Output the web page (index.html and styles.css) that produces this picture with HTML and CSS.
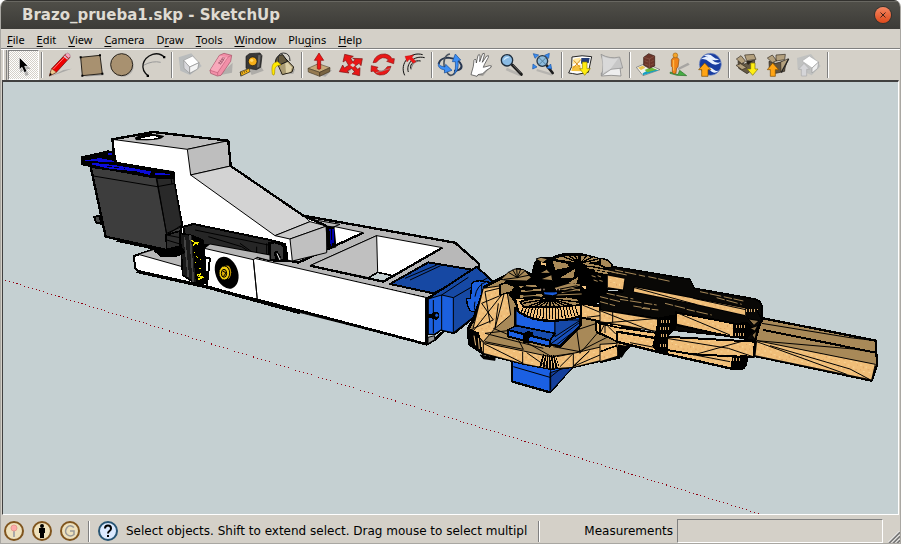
FILE: index.html
```html
<!DOCTYPE html>
<html lang="en">
<head>
<meta charset="utf-8">
<title>Brazo_prueba1.skp - SketchUp</title>
<link rel="stylesheet" href="styles.css">
</head>
<body>
<div class="window">
<header class="titlebar">
  <h1>Brazo_prueba1.skp - SketchUp</h1>
  <button class="close" aria-label="Close"><svg viewBox="0 0 16 16"><path d="M5.5 5.5l5 5M10.5 5.5l-5 5"/></svg></button>
</header>
<nav class="menubar">
  <button><u>F</u>ile</button><button><u>E</u>dit</button><button><u>V</u>iew</button><button><u>C</u>amera</button><button>D<u>r</u>aw</button><button><u>T</u>ools</button><button><u>W</u>indow</button><button>Plu<u>g</u>ins</button><button><u>H</u>elp</button>
</nav>
<div class="toolbar" role="toolbar">
  <span class="grip"></span>
  <button class="tool pressed" aria-label="Select"><svg viewBox="24 150 93 90"><path d="M61 177v42l9-8 7 17 9-4-7-17h13z" fill="#777" opacity=".5"/><path d="M58 172v37l8-7 7 16 8-4-7-15h11z" fill="#000" stroke="#fff" stroke-width="2"/></svg></button>
  <span class="sep"></span>
  <button class="tool" aria-label="Line"><svg viewBox="135 150 93 90"><path d="M150 230l65-24-25 4z" fill="#999" opacity=".7"/><path d="M148 228l7-22 42-44 13 10-41 45z" fill="#e00" stroke="#500" stroke-width="2"/><path d="M148 228l7-22 14 11z" fill="#ecc98e" stroke="#432"/><path d="M148 228l3-9 5 4z"/><path d="M160 207l40-42" stroke="#f77" stroke-width="3"/><path d="M195 165l7-6q9 2 9 10l-5 6z" fill="#f5a6bd" stroke="#645"/><path d="M192 168l11 10" stroke="#ccd" stroke-width="4"/></svg></button>
  <button class="tool" aria-label="Rectangle"><svg viewBox="228 150 93 90"><path d="M249 230l61-4v-8z" fill="#999"/><path d="M242 172l58-6 7 55-60 6z" fill="#a89170" stroke="#29241d" stroke-width="3"/><path d="M239 169h6v6h-6zM297 163h6v6h-6zM304 218h6v6h-6zM244 224h6v6h-6z"/></svg></button>
  <button class="tool" aria-label="Circle"><svg viewBox="321 150 93 90"><circle cx="369" cy="198" r="32" fill="#999" opacity=".6"/><circle cx="365" cy="194" r="33" fill="#a89170" stroke="#29241d" stroke-width="3"/></svg></button>
  <button class="tool" aria-label="Arc"><svg viewBox="414 150 93 90"><path d="M430 196q28-15 52-9" fill="none" stroke="#999" stroke-width="3"/><path d="M446 229c-30-22-18-55 12-66q22-6 36 10" fill="none" stroke="#111" stroke-width="4"/><path d="M440 224h7v7h-7zM489 168h7v7h-7z"/></svg></button>
  <span class="sep"></span>
  <button class="tool" aria-label="Make Component"><svg viewBox="525 150 93 90"><path d="M536 172l38-12 31 38-35 27-29-13z" fill="#aab0b7" opacity=".65"/><path d="M551 181l27-13 19 20-28 13z" fill="#fff" stroke="#999" stroke-width="2"/><path d="M551 181l18 20v19l-17-15z" fill="#d8d8dc" stroke="#999" stroke-width="2"/><path d="M569 201l28-13-4 19-24 13z" fill="#f4f4f4" stroke="#888" stroke-width="2"/></svg></button>
  <button class="tool" aria-label="Eraser"><svg viewBox="618 150 93 90"><path d="M658 226l38-8 2-30z" fill="#999" opacity=".6"/><path d="M630 211l28-45 14-6 23 6-3 18-29 42-11 2-20-8z" fill="#f28fa8" stroke="#a04d62" stroke-width="2"/><path d="M630 211l23 7 31-47 11-5M653 218v9" fill="none" stroke="#bd6178" stroke-width="2"/><path d="M632 209l27-42 24 5-31 44z" fill="#f8a9bb"/><path d="M656 192l14-21M661 194l14-22M655 187l7 4m-3-9 8 5m-3-10 8 4" stroke="#904b60" stroke-width="2"/></svg></button>
  <button class="tool" aria-label="Tape Measure"><svg viewBox="711 150 93 90"><path d="M750 214l28-22 13 20-36 13z" fill="#888" opacity=".5"/><path d="M738 169l10-8 32-2 6 8-4 35-13 7-31-4z" fill="#393939" stroke="#171717" stroke-width="2"/><path d="M775 165l7 1-4 34-7 3z" fill="#666"/><circle cx="758" cy="184" r="13" fill="#f5ae19" stroke="#111" stroke-width="2"/><circle cx="755" cy="181" r="5" fill="#ffd569"/><path d="M720 216l28-11 2 10-26 13z" fill="#f9b716" stroke="#222" stroke-width="2"/><path d="M726 216l2 5m4-8 2 5m4-7 2 5M722 217v12" stroke="#222" stroke-width="2"/></svg></button>
  <button class="tool" aria-label="Paint Bucket"><svg viewBox="804 150 93 90"><path d="M840 223l40-2 5-14-27-8z" fill="#888" opacity=".6"/><path d="M829 184l26-10 26 27-5 15-29 8z" fill="#ac9d73" stroke="#272217" stroke-width="3"/><path d="M855 179l21 23-5 14-13 3z" fill="#ddd0a7"/><path d="M826 186q3-22 22-22l15 20-29 13z" fill="#665a3e" stroke="#111" stroke-width="3"/><path d="M836 186q-6-27 14-27t20 24" fill="none" stroke="#333" stroke-width="3"/><path d="M833 185c-17 2-19 14-16 38q6 7 7-4c0-17 2-22 19-24z" fill="#ffea00" stroke="#aa9100" stroke-width="2"/></svg></button>
  <span class="sep"></span>
  <button class="tool" aria-label="Push Pull"><svg viewBox="15 150 93 90"><path d="M28 218l48 12 20-20z" fill="#999" opacity=".7"/><path d="M24 205l31-14 35 12-31 14z" fill="#c6a979" stroke="#5a4b33" stroke-width="2"/><path d="M24 205l35 12v12l-34-13z" fill="#967b52" stroke="#4a3e2b" stroke-width="2"/><path d="M59 217l31-14-1 12-30 14z" fill="#796442" stroke="#44351f" stroke-width="2"/><path d="M52 206v-25h-9l14-22 14 22h-9v25q-5 4-10 0z" fill="#f01616" stroke="#8c0a0a" stroke-width="2"/></svg></button>
  <button class="tool" aria-label="Move"><svg viewBox="108 150 93 90"><path d="M146 192l31 35M171 188l-31 29" stroke="#888" stroke-width="7" opacity=".5"/><path d="M134 163l26 6-8 6 7 12 6-9-7-3 29 1-4 21-6-7-12 9 8 9 7-5-1 24-23-5 8-7-9-10-13 8 5 6-29-4 10-20 5 9 13-8-9-15-8 5z" fill="#e91717" stroke="#771414" stroke-width="2"/><path d="M150 195l8-5 8 5-7 7z" fill="#d5d1ca"/></svg></button>
  <button class="tool" aria-label="Rotate"><svg viewBox="201 150 93 90"><path d="M219 188q8-28 37-26 14 2 20 14h7l-2 15-21-7 6-4q-19-17-37 7zM273 199q-7 28-34 26-12-1-19-12l-7 2 1-18 20 5-5 5q17 17 33-7z" fill="#e91717" stroke="#8a1717" stroke-width="2"/><path d="M228 218l45-13" stroke="#999" stroke-width="2"/></svg></button>
  <button class="tool" aria-label="Follow Me"><svg viewBox="294 150 93 90"><path d="M314 226c-17-36 17-73 54-62M325 216c-8-24 16-51 49-43M332 206c-3-16 13-27 30-23" fill="none" stroke="#111" stroke-width="3"/><path d="M333 209c4-17 7-21 23-26" fill="none" stroke="#777" stroke-width="3"/><path d="M315 169l27-4-6 7 12 13-8 5-12-12-7 8z" fill="#f11717" stroke="#9c1111"/></svg></button>
  <span class="sep"></span>
  <button class="tool" aria-label="Orbit"><svg viewBox="405 150 93 90"><path d="M416 192c5-28 58-22 68 3 4 14-12 18-22 17" fill="none" stroke="#27364f" stroke-width="6"/><path d="M436 213c-10-29-1-49 14-51M441 216c10 22 31 4 29-22" fill="none" stroke="#49525e" stroke-width="5"/><path d="M415 190q4 10 20 11l2-8 19 18-23 8 1-9q-22-4-19-20zM461 224q7-11 5-39h-9l9-23 16 18-8 3q4 29-13 41z" fill="#3d8ff6" stroke="#164c94" stroke-width="2"/></svg></button>
  <button class="tool" aria-label="Pan"><svg viewBox="498 150 93 90"><path d="M520 225l29 3 29-35-26 20z" fill="#777" opacity=".5"/><path d="M513 224l7-25 2-18q4-8 6 0l1 8 5-23q5-6 6 2l-1 17 9-24q7-4 5 4l-6 22 13-19q8-4 5 4l-12 22-3 8 19-5q8 0 4 5-17 10-25 19l-14 3-3 5z" fill="#fff" stroke="#333" stroke-width="2"/></svg></button>
  <button class="tool" aria-label="Zoom"><svg viewBox="591 150 93 90"><path d="M619 207l42 18" stroke="#999" stroke-width="8" opacity=".5"/><path d="M637 195l27 28" stroke="#1d1d1d" stroke-width="9" stroke-linecap="round"/><path d="M639 195l23 24" stroke="#777" stroke-width="2"/><circle cx="621" cy="181" r="17" fill="#8abbe4" stroke="#1f2e3e" stroke-width="4"/><path d="M610 182q3-14 20-11-12 4-20 11z" fill="#d3ecff"/></svg></button>
  <button class="tool" aria-label="Zoom Extents"><svg viewBox="684 150 93 90"><path d="M710 210l46 14" stroke="#999" stroke-width="7" opacity=".5"/><path d="M740 196l18 23" stroke="#1d1d1d" stroke-width="8" stroke-linecap="round"/><circle cx="727" cy="183" r="16" fill="#8dbbdc" stroke="#253646" stroke-width="4"/><path d="M717 173l21 21M738 173l-21 21" stroke="#55819f" stroke-width="3"/><path d="M700 161l16 4-11 10zM748 160l-2 15-12-9zM698 207l1-15 12 9zM755 207l-15-3 12-12z" fill="#388df5" stroke="#1b55a3" stroke-width="2"/></svg></button>
  <span class="sep"></span>
  <button class="tool" aria-label="Add Location"><svg viewBox="795 150 93 90"><path d="M806 219l9-19 1-29q31-7 59-1l-10 47-34 6q-15-3-25-4z" fill="#fff" stroke="#222" stroke-width="3"/><path d="M821 176l20-3-2 16-22 3z" fill="#ffe7a2"/><path d="M844 174h25l-3 15-23 2z" fill="#253e77"/><path d="M818 198l23-4 2 20-29-1z" fill="#f6c23d"/><path d="M821 181l18 20M819 205l24-27" stroke="#d89025" stroke-width="3"/><path d="M847 186h14v20h10l-17 20-15-20h8z" fill="#ffed10" stroke="#8c8000" stroke-width="2"/></svg></button>
  <button class="tool" aria-label="Toggle Terrain"><svg viewBox="-12 150 93 90"><path d="M4 219l11-10 45-7 3 26q-30-4-59 0z" fill="#eee" stroke="#777" stroke-width="2"/><path d="M3 163q27 15 56 8l9 33-35 4-28 19q8-33-2-64z" fill="#c7c7c7" stroke="#888" stroke-width="2"/><path d="M7 169q25 12 48 6l-23 31-23 13z" fill="#ddd" opacity=".8"/></svg></button>
  <span class="sep"></span>
  <button class="tool" aria-label="Photo Textures"><svg viewBox="99 150 93 90"><path d="M109 202l28-12 43 19-51 18z" fill="#f2f2e9" stroke="#656565" stroke-width="2"/><path d="M128 220l24-14 24 5-47 15z" fill="#159fc4"/><path d="M134 210l18-8 19 7-29 8z" fill="#6fba3c"/><path d="M114 203l14-6 8 6-13 7z" fill="#edc34d"/><path d="M131 172l15-11 18 7v30l-16 7-17-9z" fill="#6c352a" stroke="#30150f" stroke-width="2"/><path d="M131 172l17 5 16-9M148 177v28M134 182l11 4m-11 6 11 4M152 185l9-4m-9 14 9-4" fill="none" stroke="#8c5a4c" stroke-width="2"/></svg></button>
  <button class="tool" aria-label="Street View"><svg viewBox="192 150 93 90"><path d="M235 211l34-17-5-6-31 16z" fill="#888" opacity=".6"/><path d="M211 216l23 8 5-13 21 16-29-1-21-6z" fill="#46ad43" stroke="#287027" stroke-width="2"/><path d="M214 180l5-7h14l4 6-3 22-4 3-2 15-6 3-5-5v-15l-3-3z" fill="#f08418" stroke="#8b4a11" stroke-width="2"/><circle cx="226" cy="166" r="7" fill="#f4a52b" stroke="#a56816" stroke-width="2"/><path d="M221 180v32" stroke="#ffc052" stroke-width="3"/></svg></button>
  <button class="tool" aria-label="Preview in Google Earth"><svg viewBox="285 150 93 90"><circle cx="331" cy="193" r="33" fill="#183c9f" stroke="#7d93c4" stroke-width="2"/><path d="M302 178q17-16 32 0 14 15 30 8-18 16-36 0-12-12-26-8zM312 167q16-8 27 3 10 9 20 6-14 10-28 0-9-7-19-9zM320 203q12-5 22 6 8 7 15 2-9 12-22 4-7-8-15-12z" fill="#e8f1ff"/><path d="M305 229v-20h-9l18-20 19 20h-9v20z" fill="#ffa414" stroke="#7a4a00" stroke-width="2"/></svg></button>
  <span class="sep"></span>
  <button class="tool" aria-label="Get Models"><svg viewBox="396 150 93 90"><path d="M414 184l20 8 30-12-1 25-22 16-25-16z" fill="#665a45" stroke="#29231a" stroke-width="2"/><path d="M409 177l14-10 14 17-12 7zM434 165l28-2 6 15-28 4zM408 196l14-5 18 12-14 6z" fill="#b3a07e" stroke="#332b20" stroke-width="2"/><path d="M438 184l22-3-16 14z" fill="#2a241a"/><path d="M452 189h13v18h9l-16 19-16-19h10z" fill="#ffee13" stroke="#7d7200" stroke-width="2"/></svg></button>
  <button class="tool" aria-label="Share Model"><svg viewBox="489 150 93 90"><path d="M507 184l20 6 30-8-3 32-27 6-19-16z" fill="#605442" stroke="#241e18" stroke-width="2"/><path d="M502 174l15-9 13 17-13 6zM528 165l28-2-2 16-26 4zM542 186l23-10-14 37-8 4z" fill="#b3a07e" stroke="#302820" stroke-width="2"/><path d="M544 217l22-40" stroke="#222" stroke-width="4"/><path d="M511 229v-20h-9l16-20 18 20h-10v20z" fill="#ffa414" stroke="#7a4a00" stroke-width="2"/></svg></button>
  <button class="tool" aria-label="Share Component"><svg viewBox="582 150 93 90"><path d="M591 174l42-12 29 36-27 28-42-20z" fill="#b3b7ba" opacity=".6"/><path d="M606 183l22-15 28 18-20 18z" fill="#fff" stroke="#aaa" stroke-width="2"/><path d="M636 204l20-18-3 19-17 14z" fill="#eee" stroke="#999" stroke-width="2"/><path d="M604 228v-20h-9l17-18 17 18h-9v20z" fill="#d5d5d8" stroke="#aaa" stroke-width="2"/></svg></button>
  <span class="sep"></span>
</div>
<main class="viewport">
<svg class="model" viewBox="3 82 895 432" preserveAspectRatio="xMinYMin meet" role="img" aria-label="Robot arm model" shape-rendering="crispEdges">
<defs>
  <pattern id="wood" width="37" height="31" patternUnits="userSpaceOnUse"><path fill="#f0be78" d="M0 0h37v31H0z"/><path d="M2 3h6v3H2zM20 9h3v6h-3zM12 22h6v3h-6zM29 25h6v3h-6z" fill="#f8d496"/><path d="M10 8h3v5h-3zM26 18h6v3h-6zM3 17h4v3H3zM31 3h4v4h-4z" fill="#dfa565"/></pattern>
</defs>
<path d="M5 280L760 514" stroke="#900010" stroke-dasharray="1 3" fill="none"/>
<g transform="translate(230 150) scale(.3333333)" stroke="#000" stroke-width="3" stroke-linejoin="round">
  <path d="M220 197L675 278 748 342 745 365 590 445-80 295-60 275 130 290z" fill="#b8b8b8" stroke-width="7"/>
  <path d="M-80 290L590 443V583L200 485-70 412z" fill="#fff"/>
  <path d="M-75 410L200 480 590 583 615 568 640 545" fill="none" stroke-width="8"/>
  <path d="M-65 412L210 488" stroke-width="10"/>
  <path d="M590 443V583" stroke-width="8"/>
  <path d="M70 328L82 450" fill="none"/>
  <path d="M315 230L400 248 205 338 160 330z" fill="#fff"/>
  <path d="M300 291L318 287 330 282 205 338 187 333z" fill="#c0c0c0" stroke="none"/>
  <path d="M400 248L205 338 165 330" fill="none" stroke-width="7"/>
  <path d="M240 347L440 257 637 293 460 395z" fill="#fff"/>
  <path d="M240 347L440 257 443 367 415 383z" fill="#c0c0c0"/>
  <path d="M415 384L443 367 488 377 460 395z" fill="#c5d0d2" stroke-width="5"/>
  <path d="M637 293L460 395 240 347" fill="none" stroke-width="7"/>
  <path d="M255 210L330 223 300 235" fill="none"/>
  <path d="M480 402L595 337 750 363 610 430z" fill="#1648a3" stroke-width="6"/>
  <path d="M525 385L620 345M540 390L632 347M650 408L745 352" fill="none"/>
  <path d="M595 447L610 435 740 350 775 382 795 400 780 450 728 505 672 550 632 540 615 553 595 553z" fill="#1649a5" stroke-width="6"/>
  <path d="M595 447L635 435 670 443V548L632 540 612 553 595 553z" fill="#1b60df"/>
  <path d="M610 450V550M635 435V540M670 443L775 382M635 435L715 382M670 548L725 505" fill="none"/>
  <path d="M725 400Q740 385 790 400L765 485H725Q710 475 710 445Q722 450 722 440z" fill="#1b60df" stroke-width="4"/>
  <path d="M735 440Q740 405 770 395M755 400V460M735 455Q730 475 738 486" fill="none"/>
  <path d="M590 495h18v-5q18-7 18 7t-18 8v-4h-18z" stroke-width="4"/><circle cx="620" cy="496" r="6" fill="#1b60df"/>
  <path d="M594 562l20-5v12l-20 12z" fill="#999"/>
</g>
<g transform="translate(70 120) scale(.3333333)" stroke="#000" stroke-width="3" stroke-linejoin="round">
  <path d="M192 408L260 385 420 415 410 500 205 455 195 445z" fill="#fff" stroke-width="6"/>
  <path d="M205 403L260 386 350 405 340 441z" fill="#b9b9b9"/>
  <path d="M200 454L412 501" stroke-width="10"/>
  <path d="M135 130L127 58 250 36 475 62 482 138 700 287 770 318 770 395 667 423 330 360 310 155z" fill="#fff"/>
  <path d="M127 58L250 36 475 62 352 88z" fill="#bebebe"/>
  <path d="M352 88L475 62 482 138 362 165z" fill="#bebebe"/>
  <path d="M362 165L482 138 700 287 720 305 615 347z" fill="#d3d3d3"/>
  <path d="M615 347L720 305 770 318 660 357z" fill="#cacaca"/>
  <path d="M660 357L770 318V398L667 423z" fill="#c0c0c0"/>
  <path d="M768 318l24 3 6 60-25 6z" fill="#000"/><path d="M780 326l4 52M789 328v42" stroke="#0000a8" stroke-width="4"/>
  <path d="M135 130L127 58 250 36 475 62 482 138 700 287 770 318" fill="none" stroke-width="7"/>
  <path d="M196 53q35-18 85-4-8 13-83 10z"/><path d="M212 56q29-11 54-5-10 8-54 5z" fill="#fff" stroke="none"/>
  <path d="M340 320L370 312 600 360 645 372Q652 395 650 422L600 407 410 375 345 365z" fill="#262626" stroke-width="6"/>
  <path d="M375 330L605 377M415 350L515 380 545 400M510 370l40 29M560 380v23M590 370v36" fill="none"/>
  <path d="M598 420V370l15-4 28 9 4 47z" fill="#3a3a3a" stroke-width="8"/>
  <path d="M618 418l-5-20 8-4 12 20" stroke-width="4"/><path d="M621 400l9 20" fill="none" stroke="#eee"/>
  <path d="M330 340L360 345 398 360 410 490 375 490 338 465z" fill="#191919" stroke-width="5"/>
  <path d="M343 350L355 470M360 345l10 140" stroke="#444" fill="none" stroke-width="5"/>
  <path d="M368 350L400 365 410 490 380 488z" stroke-width="5"/>
  <path d="M365 360l8 7 13 1-13 3-3 8M379 369l6 7M371 397h5M379 407l3 6M390 418h4M375 427h4M388 445h5M380 466l12-4-5 8 14 2-17 6" fill="none" stroke="#f4ea00" stroke-width="4"/>
  <path d="M400 388L412 380 550 408 600 420" fill="none" stroke-width="7"/>
  <path d="M403 385L550 419 562 412 600 422V405L420 372z" fill="#b5b5b5"/>
  <path d="M140 360L285 391 330 390 325 380" fill="#202020" stroke-width="10"/>
  <path d="M255 393l40-12 42 4 6 12-20 10-50 1z" stroke-width="5"/>
  <path d="M88 287l-15 4 5 17 18 4z" fill="#444" stroke-width="6"/>
  <path d="M62 140L310 175 335 310 325 380 290 390 107 350z" fill="#3d3d3d" stroke-width="7"/>
  <path d="M260 172L310 170 335 315 290 345 278 275z" fill="#292929"/>
  <path d="M70 168L262 200 315 190M258 172L290 342V390M303 175l3 18M290 340l45-20M288 350l34 17" fill="none"/>
  <path d="M35 112L115 94 132 98 138 128 312 157V175L250 172 35 133z" stroke-width="6"/>
  <path d="M65 120L90 117 130 125 95 123zM67 131L135 138 240 156 120 144zM255 161L300 164M115 101l12 2M44 121h18M200 153l40 9" fill="none" stroke="#0b0bd9" stroke-width="5"/>
  <path d="M288 345l42-12v45l-40 10z" fill="#2e2e2e" stroke-width="5"/><path d="M290 360l40 12M290 345l40 8" fill="none"/>
  <path d="M550 418L562 540" fill="none"/>
  <ellipse cx="470" cy="458" rx="32" ry="48" transform="rotate(-20 470 458)"/>
  <ellipse cx="471" cy="457" rx="14" ry="22" fill="#c79b06"/><ellipse cx="463" cy="459" rx="16" ry="21" fill="#f2cd10"/><ellipse cx="462" cy="460" rx="8" ry="12" fill="#d7a907"/><path d="M458 453l10 6-8 11" fill="none"/>
</g>
<g transform="translate(460 240) scale(.3333333)" stroke="#000" stroke-width="3" stroke-linejoin="round">
  <path d="M157 350V425L270 457 345 372z" fill="#1b60e2" stroke-width="7"/><path d="M270 398V457L345 375z" fill="#143f9c"/><path d="M160 380L270 412 310 380M272 390v60" fill="none"/>
  <path d="M25 265L40 240 75 140 175 87 320 150 440 210 510 265V315L478 348 340 380 270 385 190 370 70 340 28 312z" fill="#a88958" stroke-width="9"/>
  <path d="M38 270L70 145 138 135 152 225 105 265 70 305z" fill="url(#wood)"/>
  <path d="M90 250L75 155 138 140M40 265L100 240 65 190 125 165 38 275M138 140L105 265M115 190l-10 75" fill="none"/>
  <path d="M28 268L70 308 190 333 270 350 340 340 478 308 510 300 478 348 340 382 270 387 190 372 70 340z" fill="url(#wood)"/>
  <path d="M70 310L190 370M70 310V340M188 335v36M200 338l60 42M290 350l50-10v40l48-47-50 47 140-60M300 380l40-40" fill="none"/>
  <path d="M243 362Q270 370 292 362" fill="none" stroke-width="42" stroke-dasharray="5 3"/>
  <path d="M75 305L190 328 160 270 75 280 250 325M100 265l95 40 80 45M350 338L455 285 420 270 360 340 350 270 410 250M280 320l80 15" fill="none"/>
  <path d="M32 270l23 10 10 58-35-25z" stroke-width="5"/><path d="M42 287l5 29M55 294l3 33" stroke="#e7b878"/>
  <path d="M60 345l45 8v8l-35-5z"/>
  <path d="M165 205L362 230V257L300 320 220 300 165 285z" fill="#174fb9" stroke-width="7"/>
  <path d="M168 212L285 240V285L168 255z" fill="#1c61e4"/><path d="M285 240h77L285 290z" fill="#1649a8"/>
  <path d="M143 270L168 257 285 280 270 302z" fill="#174cb0" stroke-width="5"/><path d="M143 270L270 302V320L145 290z" fill="#1c61e4" stroke-width="6"/><path d="M193 308v-25q8-12 25-3l-12 13v15z" stroke-width="5"/>
  <path d="M268 315L362 245M285 318L360 260" fill="none"/>
  <path d="M135 130L165 90Q195 85 215 112L225 70Q235 50 275 55 310 35 365 43 430 55 455 88L540 105 540 205 415 185 370 190 165 185 140 150z" stroke-width="6"/>
  <path d="M165 175L175 215Q220 246 285 242Q335 240 368 225V185L280 170z" fill="url(#wood)" stroke-width="7"/>
  <path d="M188 203Q265 235 355 205" fill="none" stroke-width="35" stroke-dasharray="3 6"/>
</g>
<g transform="translate(500 245) scale(.3333333)" stroke="#000" stroke-width="3" stroke-linejoin="round">
  <path d="M3 103L25 82 45 72 72 74 94 98 80 108 20 106z" fill="#a88958"/>
  <path d="M52 98L25 82M52 98L38 74M52 98L50 71M52 98L62 73M52 98L75 77M52 98L90 90M52 98L12 103" fill="none"/>
  <path d="M50 122L105 117 118 126 60 130zM58 135L118 130 130 140 62 143zM55 148L125 146 135 156 60 160zM0 118l20-3 25 10-10 15-35 10z" fill="#a88958" stroke-width="4"/>
  <path d="M70 124l35 5M75 136l40 6M70 152l50 4" fill="none"/>
  <path d="M60 170Q90 160 130 158L200 155 235 162 240 180Q150 190 70 185z" fill="#a88958" stroke-width="5"/>
  <path d="M150 160L70 175M150 160L85 184M150 160L102 185M150 160L118 186M150 160L134 187M150 160V187M150 160L166 187M150 160L182 186M150 160L200 185M150 160L220 182M150 160L238 172" fill="none" stroke-width="4"/>
  <path d="M108 42l15-5 20 5-15 12zM118 85l22-12 12 12zM120 103l35-14 3 18z" fill="#a88958"/>
  <path d="M122 52l15 2v8l-15-3z" fill="#f0c282" stroke="none"/>
  <path d="M155 45L205 55 210 68 165 77zM172 101L228 68 222 100zM160 42Q190 26 235 32L238 55 170 45zM240 52L243 30Q285 32 315 48L268 55 330 62 262 65zM195 118L240 90 230 118z" fill="#a88958" stroke-width="4"/>
  <path d="M240 55L185 33M240 55L205 31M240 55L222 30M240 55L262 31M240 55L278 36M240 55L295 42M215 57l20 4M170 115l55 2M275 105l35-14M272 95l40 12M280 112l30 5" fill="none" stroke-width="4"/>
  <path d="M262 67l90 17M275 60l115 22M285 78l50 10" stroke="#a88958" fill="none" stroke-width="5"/>
  <path d="M275 92l12 4m-6 9 12 4m0-17 10 4m-5 10 10 3" stroke="#a88958"/>
  <path d="M165 130l50-15 25 5-45 14zM185 143l55-10M170 150l75-3M200 125l40 12" fill="#a88958" stroke="#a88958"/>
  <path d="M170 134l62-12M190 140l40 2" fill="none"/>
  <path d="M322 88l50 9-2 36-48-10z" fill="url(#wood)" stroke-width="4"/><path d="M325 92l45 12" fill="none"/>
  <path d="M245 124l14-3v14z" fill="#f0c282" stroke="none"/>
  <path d="M130 140h42v8l-14 4-25-3z" fill="#1c61e4"/><path d="M136 143h30" stroke="#073180"/><path d="M122 131v5m10-5v5m38-5v5m8-5v5" stroke="#dba"/>
</g>
<g transform="translate(460 240) scale(.3333333)" stroke="#000" stroke-width="3" stroke-linejoin="round">
  <path d="M362 190L540 220V270L362 232z" fill="url(#wood)" stroke-width="6"/><path d="M458 210v40M367 195l170 70M380 232l158-20" fill="none"/>
  <path d="M407 247l63 5 70 25v40L478 305 410 277z" fill="url(#wood)" stroke-width="6"/><path d="M435 250l-15 25m15-25v30m28-20-35 22M470 275v30" fill="none"/>
</g>
<g transform="translate(600 250) scale(.3333333)" stroke="#000" stroke-width="3" stroke-linejoin="round">
  <path d="M490 205L828 272V300L832 342 815 392 465 318 465 245z" fill="#a88958" stroke-width="7"/>
  <path d="M470 272L826 343 815 390 465 317z" fill="url(#wood)"/>
  <path d="M490 240L828 308" stroke-width="6"/><path d="M485 220L750 263 826 272M470 272L760 297 828 308M470 275L740 373M510 287l240 70 60 32M620 230l210 42" fill="none"/>
  <path d="M25 35L40 50 270 88 283 115 465 147Q488 153 487 180V205L470 240 465 272 400 260 215 240 175 205 0 180V135L70 125 25 110z" fill="#090806" stroke-width="5"/>
  <path d="M0 25Q25 25 40 50L20 55 0 45z" fill="#a88958" stroke-width="5"/>
  <path d="M5 60l50 10M20 62l60 13M45 60l90 19M145 80l70 15M60 148l110 17M20 130l80 17M0 140l60 15M0 155l45 12M125 175l50 5M300 125l130 28M350 143l75 20M100 168l50 8M195 160l60 15M260 178l75 17" stroke="#a88958" fill="none" stroke-dasharray="25 5 35 8"/>
  <path d="M22 75l53 10-5 35L22 113zM102 110L437 174V197L285 163 100 126z" fill="url(#wood)"/>
  <path d="M100 112l190 52M280 145l157 34" fill="none"/>
  <path d="M23 122h30" stroke="#c5d0d2" stroke-width="5"/>
  <path d="M0 180L175 208V245L0 215z" fill="url(#wood)"/><path d="M38 183v35M0 182l165 65M0 220l175-15" fill="none"/>
  <path d="M227 187L402 220V262L228 225z" fill="url(#wood)" stroke-width="6"/><path d="M235 190l155 65M228 222l172 40" fill="none"/>
  <path d="M0 220L50 232 175 250 180 290 50 275 0 248z" fill="url(#wood)" stroke-width="5"/><path d="M15 222v27M0 250l15-30 32 32M50 245l125 42" fill="none"/>
  <path d="M50 245L200 270 405 318 440 318Q442 350 425 358L390 355 190 310 50 275z" fill="url(#wood)" stroke-width="7"/>
  <path d="M90 278L390 335M190 310l205 45" fill="none"/>
  <path d="M195 260L465 275 460 322 280 313 200 300z" fill="url(#wood)" stroke-width="6"/><path d="M200 265l185 30 80 27M205 260l260 15M280 315l150-42" fill="none"/>
  <path d="M175 205l52-10v38l-25 25v50q-35-3-43-20l12-55zM398 320l42-3v28l-16 14-30-5zM402 222l40-5 20 25-25 24-37-5z" stroke-width="4"/>
  <path d="M182 215h32M180 237h28M182 258h23M180 287h20M400 330h20M408 231h31M405 255h27M438 181h35" fill="none" stroke="#dbad70" stroke-width="9" stroke-dasharray="3 5"/>
  <path d="M445 207l32 5-15 14zM450 235l23-8-8 16zM456 255l14-12-5 25z" fill="#90754b"/>
  <path d="M470 180l15 28-20 67-5 43" fill="none" stroke-width="5"/>
  <path d="M0 283L50 280 55 318 0 335z" fill="url(#wood)"/><path d="M55 285l30 5-20 32-12-4z"/><path d="M0 305l50-18M0 337l60-14" fill="none" stroke-width="5"/>
</g>
</svg>
</main>
<footer class="statusbar">
  <button class="badge" aria-label="Geo-location"><svg viewBox="0 0 20 20"><circle cx="10" cy="10" r="9" class="ring"/><path d="M10 10v6" stroke="#aaa" stroke-width="2"/><circle cx="10" cy="7" r="3" fill="#faa" stroke="#e79b91"/></svg></button>
  <button class="badge" aria-label="Credits"><svg viewBox="0 0 20 20"><circle cx="10" cy="10" r="9" class="ring"/><circle cx="10" cy="5" r="2"/><path d="M7 7h6v5h-1v5H8v-5H7z"/></svg></button>
  <button class="badge" aria-label="Sign in"><svg viewBox="0 0 20 20"><circle cx="10" cy="10" r="9" class="ring"/><path d="M14 6.5q-4-3.500-7 0-3 4 0 7 3.500 3 7 0V10h-4" fill="none" stroke="#999" stroke-width="1.500"/></svg></button>
  <span class="rule"></span>
  <button class="badge" aria-label="Help"><svg viewBox="0 0 20 20"><circle cx="10" cy="10" r="9" fill="#dceaff" stroke="#285574" stroke-width="2"/><path d="M7 7.500q0-3 3-3t3 3q0 1.500-1.500 2.500-1.500 1-1.500 2.500" fill="none" stroke="#000" stroke-width="2"/><path d="M9 14h2v2H9z"/></svg></button>
  <p class="hint">Select objects. Shift to extend select. Drag mouse to select multipl</p>
  <span class="rule"></span>
  <label for="measure">Measurements</label>
  <input id="measure" type="text">
  <svg class="resize" viewBox="0 0 12 12"><path d="M1 12L12 1M5 12l7-7M9 12l3-3" stroke="#777" stroke-width="2"/><path d="M0 11.500L11.500 0M4 11.500L11.500 4M8 11.500L11.500 8" stroke="#fff"/></svg>
</footer>
</div>
</body>
</html>
```
FILE: styles.css
```css
* { box-sizing: border-box; }
body { margin: 0; background: #fff; color: #000; font-family: "Noto Sans", sans-serif; }
button { font: inherit; color: inherit; border: 0; padding: 0; background: none; }
svg { display: block; }
.window { height: 100vh; display: flex; flex-direction: column; background: #d4d0c8; border: 1px solid #a9a7a2; border-top: 0; border-radius: 7px 7px 0 0; overflow: hidden; }
.titlebar { flex: none; height: 29px; margin: 0 -1px; padding: 0 10px 0 22px; display: flex; align-items: center; justify-content: space-between; background: linear-gradient(#504f49, #3c3b37); border-top: 1px solid #32312e; box-shadow: inset 0 1px #686761; }
.titlebar h1 { margin: 0; font: bold 15px/24px "DejaVu Sans", sans-serif; color: #dfdbd2; }
.close { width: 16px; height: 16px; border-radius: 50%; background: linear-gradient(#f58762, #df4a1b); box-shadow: 0 0 0 1px #35312c; }
.close path { stroke: #43251c; stroke-width: 1; }
.menubar { flex: none; height: 20px; padding: 2px 6px 0; display: flex; align-items: center; gap: 12px; font-size: 11px; border-bottom: 1px solid #808080; }
.menubar u { text-underline-offset: 2px; }
.toolbar { flex: none; height: 31px; display: flex; align-items: stretch; border-top: 1px solid #fff; }
.grip { width: 4px; margin: 0 1px 0 2px; border-left: 1px solid #fff; border-right: 1px solid #808080; }
.tool { width: 31px; height: 30px; }
.tool svg { width: 31px; height: 30px; }
.pressed { border: 1px solid; border-color: #808080 #fff #fff #808080; background: repeating-conic-gradient(#fff 0 25%, #d4d0c8 0 50%) 0 0 / 2px 2px; }
.pressed svg { margin: -1px; }
.sep { width: 2px; margin: 2px 2px; border-left: 1px solid #808080; border-right: 1px solid #fff; }
.viewport { flex: 1; min-height: 0; margin: 0 1px; background: #c5d0d2; border: 1px solid #fff; border-top: 2px solid #404040; border-left-color: #404040; overflow: hidden; }
.model { width: 100%; height: auto; }
.statusbar { flex: none; height: 28px; padding: 4px 0 0 3px; display: flex; align-items: center; gap: 8px; font: 12px "DejaVu Sans", sans-serif; }
.badge { width: 20px; height: 20px; }
.badge svg { width: 20px; height: 20px; }
.ring { fill: #eee1bd; stroke: #80551e; stroke-width: 2; }
.rule { width: 2px; height: 21px; border-left: 1px solid #808080; border-right: 1px solid #fff; }
.hint { margin: 0; width: 404px; overflow: hidden; white-space: nowrap; }
.statusbar label { margin-left: auto; }
#measure { width: 206px; height: 24px; margin-left: -4px; border: 1px solid; border-color: #808080 #fff #fff #808080; background: transparent; font: inherit; }
.resize { width: 12px; height: 12px; align-self: flex-end; margin-left: -3px; }
```
